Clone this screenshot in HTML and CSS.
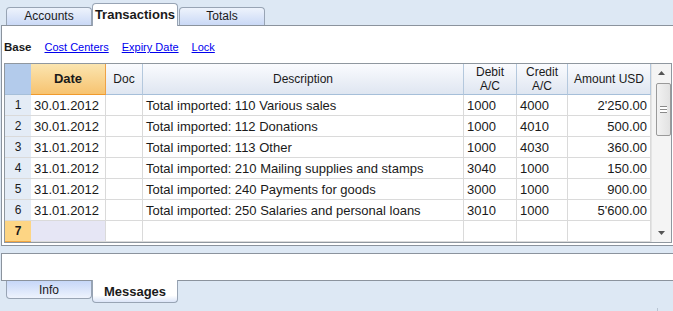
FILE: index.html
```html
<!DOCTYPE html>
<html lang="en">
<head>
    <meta charset="UTF-8" />
    <title>Transactions</title>
    <link rel="stylesheet" href="styles.css">
</head>
<body>
    <div class="tabs tabs-top">
        <div class="tab">Accounts</div>
        <div class="tab active">Transactions</div>
        <div class="tab">Totals</div>
    </div>

    <div class="panel">
        <div class="views">
            <b>Base</b>
            <a href="#">Cost Centers</a>
            <a href="#">Expiry Date</a>
            <a href="#">Lock</a>
        </div>

        <div class="grid-wrap">
            <div class="grid">
                <div class="hd corner"></div>
                <div class="hd hd-date">Date</div>
                <div class="hd">Doc</div>
                <div class="hd">Description</div>
                <div class="hd">Debit<br>A/C</div>
                <div class="hd">Credit<br>A/C</div>
                <div class="hd">Amount USD</div>

                <div class="num">1</div><div class="c">30.01.2012</div><div class="c"></div><div class="c">Total imported: 110 Various sales</div><div class="c">1000</div><div class="c">4000</div><div class="c r">2'250.00</div>
                <div class="num">2</div><div class="c">30.01.2012</div><div class="c"></div><div class="c">Total imported: 112 Donations</div><div class="c">1000</div><div class="c">4010</div><div class="c r">500.00</div>
                <div class="num">3</div><div class="c">31.01.2012</div><div class="c"></div><div class="c">Total imported: 113 Other</div><div class="c">1000</div><div class="c">4030</div><div class="c r">360.00</div>
                <div class="num">4</div><div class="c">31.01.2012</div><div class="c"></div><div class="c">Total imported: 210 Mailing supplies and stamps</div><div class="c">3040</div><div class="c">1000</div><div class="c r">150.00</div>
                <div class="num">5</div><div class="c">31.01.2012</div><div class="c"></div><div class="c">Total imported: 240 Payments for goods</div><div class="c">3000</div><div class="c">1000</div><div class="c r">900.00</div>
                <div class="num">6</div><div class="c">31.01.2012</div><div class="c"></div><div class="c">Total imported: 250 Salaries and personal loans</div><div class="c">3010</div><div class="c">1000</div><div class="c r">5'600.00</div>
                <div class="num num-current">7</div><div class="c c-current"></div><div class="c"></div><div class="c"></div><div class="c"></div><div class="c"></div><div class="c"></div>
            </div>

            <div class="scrollbar">
                <div class="arrow">
                    <svg width="7" height="4" viewBox="0 0 7 4"><polygon points="0,4 7,4 3.5,0" fill="#555"></polygon></svg>
                </div>
                <div class="track">
                    <div class="thumb"><span class="grip"></span></div>
                </div>
                <div class="arrow">
                    <svg width="7" height="4" viewBox="0 0 7 4"><polygon points="0,0 7,0 3.5,4" fill="#555"></polygon></svg>
                </div>
            </div>
        </div>
    </div>

    <div class="msg-panel"></div>

    <div class="tabs tabs-bottom">
        <div class="tab">Info</div>
        <div class="tab active">Messages</div>
    </div>

    <div class="status"><span class="status-sep"></span></div>
</body>
</html>
```

FILE: styles.css
```css
body {
    margin: 0;
    padding: 0;
    width: 673px;
    height: 311px;
    overflow: hidden;
    font-family: 'Liberation Sans', Arial, sans-serif;
    font-size: 12px;
    color: #1a1a1a;
    background: #dde8f4;
}

/* tabs */

.tabs {
    display: flex;
    padding-left: 6px;
}

.tab {
    width: 86px;
    box-sizing: border-box;
    border: 1px solid #98a4b4;
    text-align: center;
    background: linear-gradient(#eef3fc, #cad9f6);
}

.tabs-top {
    height: 26px;
    margin-bottom: -1px;
    align-items: flex-end;
}

.tabs-top .tab {
    height: 18px;
    line-height: 17px;
    margin-bottom: 1px;
    border-bottom: none;
    border-radius: 4px 4px 0 0;
}

.tabs-top .tab:last-child {
    margin-left: 1px;
}

.tabs-top .active {
    height: 23px;
    line-height: 22px;
    margin-bottom: 0;
    padding-bottom: 3px;
    font-weight: bold;
    font-size: 13px;
    background: #fff;
    position: relative;
}

.tabs-bottom {
    align-items: flex-start;
    margin-top: -1px;
}

.tabs-bottom .tab {
    height: 18px;
    line-height: 18px;
    margin-top: 1px;
    border-top: none;
    border-radius: 0 0 4px 4px;
    background: linear-gradient(#c6d7f8, #eef3fd);
}

.tabs-bottom .active {
    height: 23px;
    line-height: 24px;
    margin-top: 0;
    font-weight: bold;
    font-size: 13px;
    background: linear-gradient(#fff 70%, #dbe5f8);
    position: relative;
}

/* main panel */

.panel {
    margin-left: 1px;
    margin-right: -10px;
    padding-bottom: 2px;
    border: 1px solid #8b939d;
    background: #fff;
}

.views {
    height: 37px;
    box-sizing: border-box;
    padding: 14px 0 0 2px;
    line-height: 15px;
    font-size: 11px;
    display: flex;
    gap: 13px;
}

.views b {
    font-size: 11.5px;
}

.views a {
    color: #0000ee;
    text-decoration: underline;
}

.grid-wrap {
    display: flex;
    width: 668px;
    box-sizing: border-box;
    margin-left: 2px;
    border: 1px solid #8f979f;
}

.grid {
    display: grid;
    grid-template-columns: 26px 75px 37px 321px 53px 51px 83px;
    grid-template-rows: 31px repeat(7, 21px);
    font-size: 13px;
}

.grid > div {
    box-sizing: border-box;
    display: flex;
    align-items: center;
    white-space: nowrap;
    overflow: hidden;
}

.hd {
    justify-content: center;
    text-align: center;
    line-height: 14px;
    font-size: 12px;
    background: linear-gradient(#fafbfe, #dfe6f1);
    border-right: 1px solid #b4c8dd;
    border-bottom: 1px solid #a6bfd9;
}

.hd.corner {
    background: #b3cbeb;
    border-right: none;
}

.hd.hd-date {
    font-weight: bold;
    font-size: 13px;
    background: linear-gradient(#fbe5b0, #f7c370);
    border-right: 1px solid #eea247;
    border-bottom: 1px solid #f09a2c;
}

.c {
    padding: 0 3px;
    border-right: 1px solid #dadada;
    border-bottom: 1px solid #dadada;
}

.c.r {
    justify-content: flex-end;
}

.num {
    justify-content: center;
    font-size: 12px;
    background: #e4ecf6;
    border-bottom: 1px solid #dadada;
}

.num-current {
    font-weight: bold;
    background: #fdd584;
    border-bottom: 1px solid #f2a640;
}

.c-current {
    background: #e6e6f5;
}

/* scrollbar */

.scrollbar {
    width: 20px;
    display: flex;
    flex-direction: column;
    background: #f4f4f4;
    border-left: 1px solid #e4e4e4;
}

.arrow {
    height: 18px;
    display: flex;
    align-items: center;
    justify-content: center;
}

.track {
    flex: 1;
    padding: 1px 0 0 4px;
}

.thumb {
    width: 15px;
    height: 53px;
    box-sizing: border-box;
    border: 1px solid #9a9a9a;
    border-radius: 2px;
    background: linear-gradient(90deg, #f2f2f2, #e2e2e2);
    display: flex;
    align-items: center;
    justify-content: center;
}

.grip {
    width: 7px;
    height: 5px;
    border-top: 1px solid #8a8a8a;
    border-bottom: 1px solid #8a8a8a;
    background: linear-gradient(#fff 40%, #8a8a8a 40%, #8a8a8a 60%, #fff 60%);
}

/* messages */

.msg-panel {
    height: 26px;
    margin: 7px -10px 0 1px;
    border: 1px solid #8b939d;
    background: #fff;
}

.status {
    padding: 5px 0 0 657px;
}

.status-sep {
    display: block;
    width: 1px;
    height: 6px;
    background: #b8c4d2;
}
```
